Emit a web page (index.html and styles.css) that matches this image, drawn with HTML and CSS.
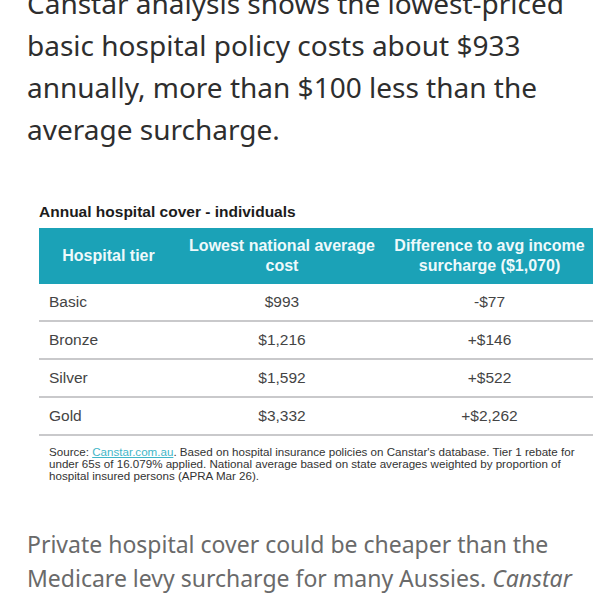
FILE: index.html
```html
<!DOCTYPE html>
<html>
<head>
<meta charset="utf-8">
<link rel="stylesheet" href="styles.css">
</head>
<body>
<article class="article">
  <p class="body-text">Canstar analysis shows the lowest-priced basic hospital policy costs about $933 annually, more than $100 less than the average surcharge.</p>
  <figure class="figure">
    <div class="chart-title">Annual hospital cover - individuals</div>
    <table class="cover-table">
      <thead>
        <tr>
          <th class="col-tier">Hospital tier</th>
          <th class="col-cost">Lowest national average cost</th>
          <th class="col-diff">Difference to avg income surcharge ($1,070)</th>
        </tr>
      </thead>
      <tbody>
        <tr><td class="tier">Basic</td><td>$993</td><td>-$77</td></tr>
        <tr><td class="tier">Bronze</td><td>$1,216</td><td>+$146</td></tr>
        <tr><td class="tier">Silver</td><td>$1,592</td><td>+$522</td></tr>
        <tr><td class="tier">Gold</td><td>$3,332</td><td>+$2,262</td></tr>
      </tbody>
    </table>
    <p class="source">Source: <a class="source-link" href="#">Canstar.com.au</a>. Based on hospital insurance policies on Canstar's database. Tier 1 rebate for under 65s of 16.079% applied. National average based on state averages weighted by proportion of hospital insured persons (APRA Mar 26).</p>
  </figure>
  <p class="caption">Private hospital cover could be cheaper than the Medicare levy surcharge for many Aussies. <em>Canstar</em></p>
</article>
</body>
</html>
```
FILE: styles.css
```css
html, body {
  margin: 0;
  padding: 0;
  background: #ffffff;
}
.article {
  width: 600px;
  padding: 0 27px;
  box-sizing: border-box;
  overflow: hidden;
  height: 600px;
}
.body-text {
  margin: -18px 0 0 0;
  font-family: "Noto Sans", "Open Sans", sans-serif;
  font-size: 28px;
  line-height: 42px;
  color: #2e2e2e;
}
.figure {
  margin: 53px -7px 0 12px;
  font-family: "Liberation Sans", Arial, sans-serif;
}
.chart-title {
  font-weight: bold;
  font-size: 15.5px;
  line-height: 18px;
  color: #1c1c1c;
  margin-bottom: 7px;
}
.cover-table {
  width: 554px;
  border-collapse: collapse;
}
.cover-table th {
  background: #1ba2b7;
  color: #eef9fb;
  font-weight: bold;
  font-size: 16px;
  line-height: 20px;
  height: 56px;
  padding: 0 4px;
  text-align: center;
  vertical-align: middle;
}
.col-tier { width: 131px; }
.col-cost { width: 200px; }
.cover-table td {
  font-size: 15.5px;
  color: #444;
  height: 36px;
  text-align: center;
  border-bottom: 2px solid #c9c9cb;
  padding: 0;
}
.cover-table td.tier {
  text-align: left;
  padding-left: 10px;
}
.source {
  margin: 10px 0 0 10px;
  font-size: 11.6px;
  line-height: 12px;
  color: #333;
}
.source-link {
  color: #3fb6c8;
}
.caption {
  margin: 45px 0 0 0;
  font-family: "Noto Sans", "Open Sans", sans-serif;
  font-size: 23px;
  line-height: 34px;
  color: #6a6a6a;
}
```
